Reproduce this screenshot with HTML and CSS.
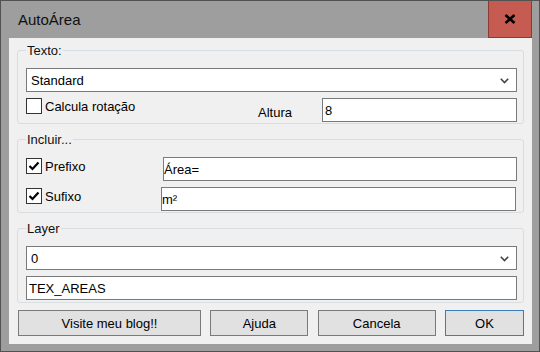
FILE: index.html
```html
<!DOCTYPE html>
<html lang="pt">
<head>
    <meta charset="UTF-8">
    <title>AutoÁrea</title>
    <link rel="stylesheet" href="styles.css">
</head>
<body>
<div class="window">
    <div class="titlebar">
        <span class="title">AutoÁrea</span>
        <div class="close">
            <svg width="12" height="10" viewBox="0 0 12 10"><path d="M1.5 1 L10.5 9 M10.5 1 L1.5 9" stroke="#000" stroke-width="2.6"/></svg>
        </div>
    </div>

    <div class="client">
        <!-- Texto -->
        <fieldset class="group">
            <legend>Texto:</legend>
            <div class="combo">
                <span>Standard</span>
                <svg class="chevron" width="9" height="6" viewBox="0 0 9 6"><path d="M0.8 0.8 L4.5 4.5 L8.2 0.8" fill="none" stroke="#444" stroke-width="1.6"/></svg>
            </div>
            <div class="row texto-row">
                <label class="check"><span class="box"></span>Calcula rotação</label>
                <span class="altura-label">Altura</span>
                <div class="field altura">8</div>
            </div>
        </fieldset>

        <!-- Incluir -->
        <fieldset class="group">
            <legend>Incluir...</legend>
            <div class="row">
                <label class="check prefix-label"><span class="box checked"><svg width="14" height="14" viewBox="0 0 14 14"><path d="M2.5 7 L5.5 10 L11.5 3.5" fill="none" stroke="#000" stroke-width="2.2"/></svg></span>Prefixo</label>
                <div class="field tight">Área=</div>
            </div>
            <div class="row">
                <label class="check suffix-label"><span class="box checked"><svg width="14" height="14" viewBox="0 0 14 14"><path d="M2.5 7 L5.5 10 L11.5 3.5" fill="none" stroke="#000" stroke-width="2.2"/></svg></span>Sufixo</label>
                <div class="field tight suffix-field">m²</div>
            </div>
        </fieldset>

        <!-- Layer -->
        <fieldset class="group layer">
            <legend>Layer</legend>
            <div class="combo">
                <span class="layer-value">0</span>
                <svg class="chevron" width="9" height="6" viewBox="0 0 9 6"><path d="M0.8 0.8 L4.5 4.5 L8.2 0.8" fill="none" stroke="#444" stroke-width="1.6"/></svg>
            </div>
            <div class="row">
                <div class="field layer-field">TEX_AREAS</div>
            </div>
        </fieldset>

        <div class="buttons">
            <button class="btn btn-blog">Visite meu blog!!</button>
            <button class="btn btn-help">Ajuda</button>
            <button class="btn btn-cancel">Cancela</button>
            <button class="btn btn-ok">OK</button>
        </div>
    </div>
</div>
</body>
</html>
```

FILE: styles.css
```css
body {
    margin: 0;
    font-family: "Liberation Sans", Arial, sans-serif;
    font-size: 13px;
    color: #000;
}

.window {
    width: 540px;
    height: 352px;
    box-sizing: border-box;
    border: 1px solid #525252;
    background: #9e9e9e;
    padding: 0 7px 7px 8px;
    display: flex;
    flex-direction: column;
}

.titlebar {
    height: 37px;
    display: flex;
    align-items: center;
    justify-content: space-between;
    flex-shrink: 0;
}

.title {
    font-size: 15px;
    padding-left: 9px;
    padding-bottom: 1px;
    color: #111;
}

.close {
    width: 44px;
    height: 37px;
    box-sizing: border-box;
    background: #c65c51;
    border: 1px solid #8a3b34;
    border-top: none;
    display: flex;
    align-items: center;
    justify-content: center;
}

.client {
    flex: 1;
    background: #f0f0f0;
    padding: 5px 8px 0 8px;
    display: flex;
    flex-direction: column;
}

.group {
    margin: 0 0 8px 0;
    border: 1px solid #d8dde2;
    border-radius: 3px;
    padding: 10px 6px 1px 8px;
    min-width: 0;
    display: flex;
    flex-direction: column;
    gap: 6px;
}

.group.layer {
    padding-bottom: 2px;
    margin-bottom: 7px;
}

.group legend {
    padding: 0 1px;
    line-height: 15px;
    color: #111;
}

.combo, .field {
    height: 24px;
    box-sizing: border-box;
    border: 1px solid #7a7a7a;
    background: #fff;
    display: flex;
    align-items: center;
    line-height: 15px;
}

.combo {
    justify-content: space-between;
    padding: 0 7px 0 4px;
}

.combo .chevron {
    margin-top: 1px;
}

.layer-value {
    padding-left: 0;
}

.field {
    padding-left: 2px;
    flex: 1;
}

.field.tight {
    padding-left: 0;
}

.row {
    display: flex;
    align-items: flex-start;
}

.check {
    display: flex;
    align-items: center;
    height: 16px;
    margin-top: 1px;
}

.box {
    width: 16px;
    height: 16px;
    box-sizing: border-box;
    border: 1px solid #333;
    background: #fff;
    margin-right: 3px;
    display: flex;
    align-items: center;
    justify-content: center;
}

.texto-row .check {
    flex: 1;
    margin-top: 0;
    padding-bottom: 3px;
}

.altura-label {
    margin-top: 7px;
    margin-right: 30px;
}

.field.altura {
    flex: none;
    width: 195px;
}

.prefix-label {
    width: 137px;
}

.suffix-label {
    width: 135px;
}

.suffix-field {
    margin-right: 1px;
}

.buttons {
    display: flex;
    justify-content: space-between;
    padding: 0 0 0 1px;
}

.btn {
    height: 26px;
    box-sizing: border-box;
    background: #e1e1e1;
    border: 1px solid #7a7a7a;
    font-family: "Liberation Sans", Arial, sans-serif;
    font-size: 13px;
    color: #000;
    padding: 0;
}

.btn-blog { width: 183px; }
.btn-help { width: 98px; }
.btn-cancel { width: 118px; }
.btn-ok {
    width: 79px;
    border-color: #3b7dbd;
}
```
